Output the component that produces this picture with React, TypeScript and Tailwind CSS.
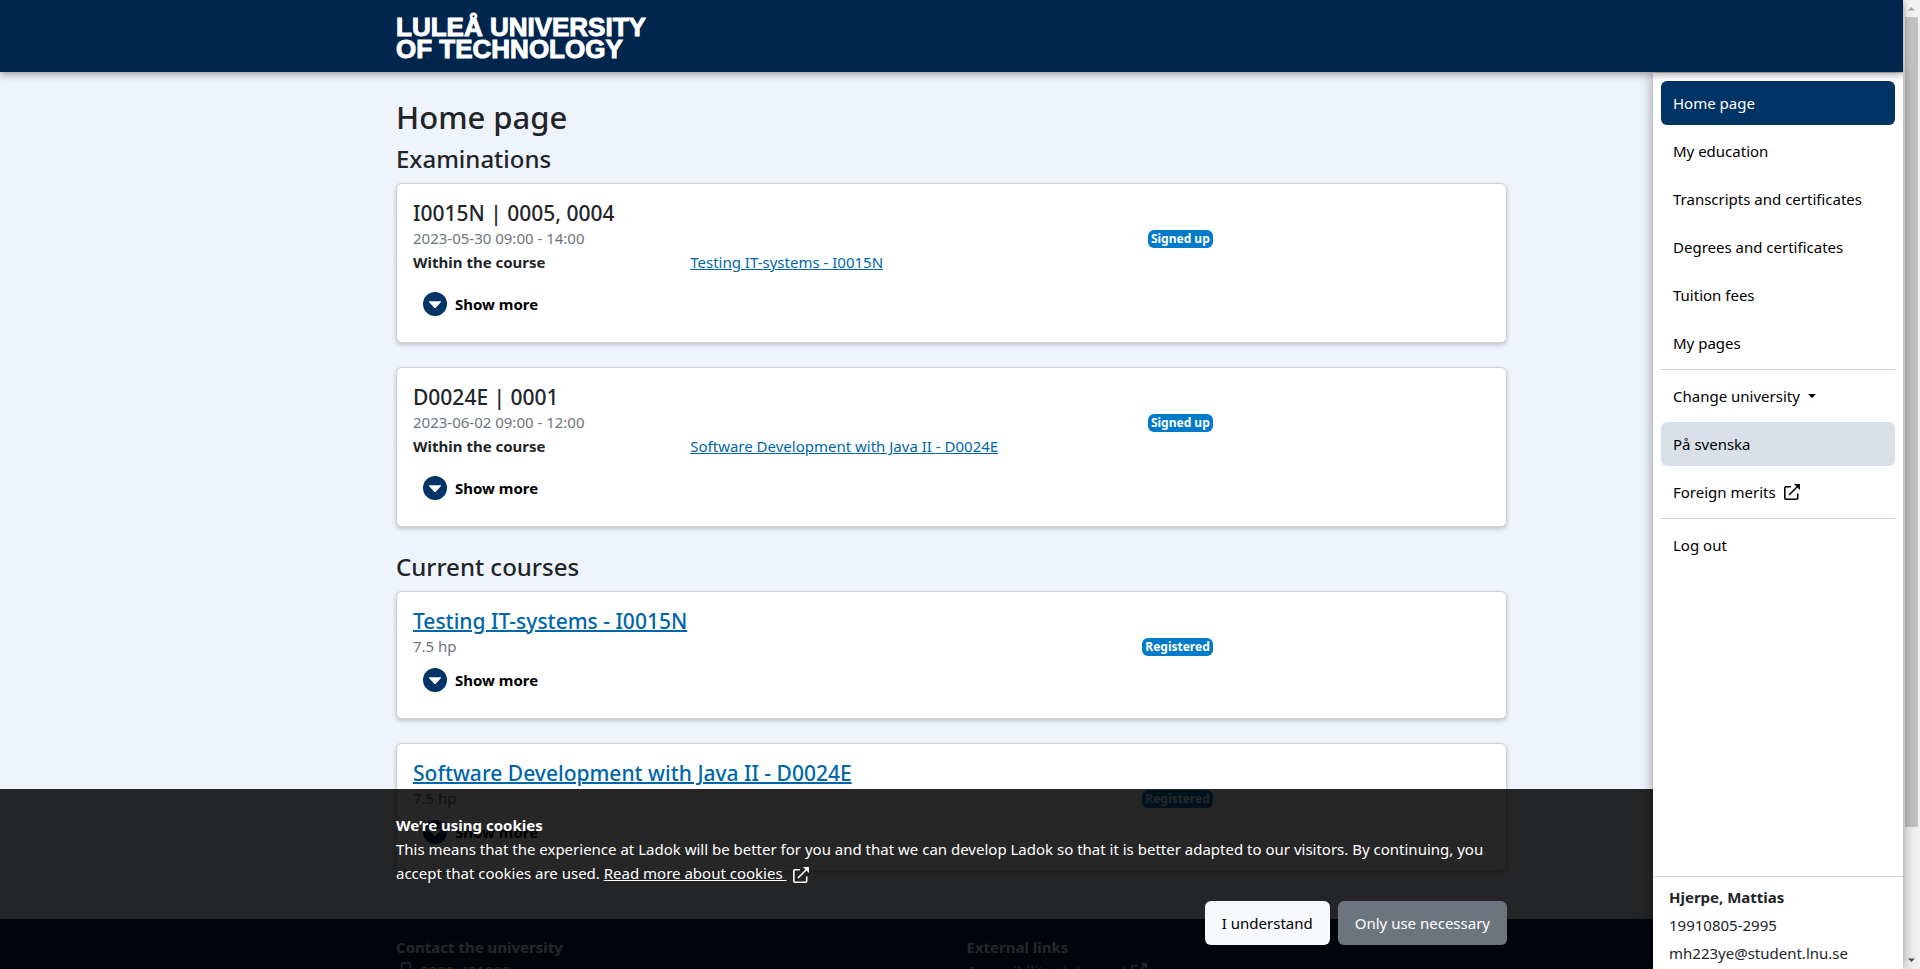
import React from "react";

type Exam = { code: string; time: string; course: string };
type Course = { name: string; credits: string };

const exams: Exam[] = [
  { code: "I0015N | 0005, 0004", time: "2023-05-30 09:00 - 14:00", course: "Testing IT-systems - I0015N" },
  { code: "D0024E | 0001", time: "2023-06-02 09:00 - 12:00", course: "Software Development with Java II - D0024E" },
];

const courses: Course[] = [
  { name: "Testing IT-systems - I0015N", credits: "7.5 hp" },
  { name: "Software Development with Java II - D0024E", credits: "7.5 hp" },
];

const pages = ["My education", "Transcripts and certificates", "Degrees and certificates", "Tuition fees", "My pages"];

function ExternalIcon() {
  return (
    <svg viewBox="0 0 16 16" className="inline-block size-4" fill="none" stroke="currentColor" strokeWidth="1.6" aria-hidden="true">
      <path d="M7 2.8H2a1.2 1.2 0 0 0-1.2 1.2v10A1.2 1.2 0 0 0 2 15.2h10.5a1.2 1.2 0 0 0 1.2-1.2V9.5" />
      <path d="M5 11 14 2" />
      <path d="M10 .1h6v6l-2-2-2-2Z" fill="currentColor" stroke="none" />
    </svg>
  );
}

function ShowMore() {
  return (
    <button type="button" className="flex h-11 items-center gap-2 self-start px-2.5 font-bold text-black">
      <svg viewBox="0 0 24 24" className="size-6" aria-hidden="true">
        <circle cx="12" cy="12" r="12" fill="#003366" />
        <path d="M6.4 9.2h11.2c.5 0 .7.5.4.9l-5.2 5.7c-.4.5-1.1.5-1.6 0L6 10.1c-.3-.4-.1-.9.4-.9Z" fill="#fff" />
      </svg>
      Show more
    </button>
  );
}

function Badge({ children }: { children: React.ReactNode }) {
  return (
    <span className="mt-0.5 flex h-[18px] items-center rounded-md bg-[#007ac9] px-[3px] text-[12px] leading-[18px] font-bold text-white">
      {children}
    </span>
  );
}

function Card({ children }: { children: React.ReactNode }) {
  return (
    <article className="mb-6 flex flex-col rounded-md border border-[#d0d0d0] bg-white py-4 shadow-[0_2px_4px_rgba(0,0,0,0.2)]">
      {children}
    </article>
  );
}

function SectionTitle({ children }: { children: React.ReactNode }) {
  return <h2 className="mb-2 text-[24px] leading-8 font-medium">{children}</h2>;
}

function NavItem({ children, tone = "" }: { children: React.ReactNode; tone?: string }) {
  return (
    <a href="#" className={`flex h-11 items-center rounded-md px-3 ${tone || "text-black"}`}>
      {children}
    </a>
  );
}

function Scrollbar() {
  return (
    <div className="flex w-[17px] shrink-0 flex-col items-center bg-[#f1f1f1]" aria-hidden="true">
      <svg viewBox="0 0 17 17" className="size-[17px]"><path d="M5 10.5 8.5 7l3.5 3.5Z" fill="#a3a3a3" /></svg>
      <div className="w-[13px] grow-[810] bg-[#c1c1c1]" />
      <div className="grow-[125]" />
      <svg viewBox="0 0 17 17" className="size-[17px]"><path d="M5 6.5 8.5 10 12 6.5Z" fill="#505050" /></svg>
    </div>
  );
}

export default function App() {
  return (
    <div className="flex h-screen overflow-hidden bg-[#eff3fb] font-['Noto_Sans','Open_Sans',sans-serif] text-[15px] leading-6 text-[#212529]">
      <div className="relative flex min-w-0 flex-1 flex-col">
        <header className="relative z-10 h-[72px] shrink-0 bg-[#00264d] shadow-[0_2px_8px_rgba(0,0,0,0.4)]">
          <div className="mx-auto max-w-[1111px] pt-4">
            <a
              href="#"
              className="inline-block font-['Liberation_Sans',Arial,sans-serif] text-[26px] leading-[22px] font-bold text-white [-webkit-text-stroke:1px_white]"
            >
              LULEÅ UNIVERSITY
              <br />
              OF TECHNOLOGY
            </a>
          </div>
        </header>

        <div className="grid min-h-0 flex-1 grid-cols-[minmax(0,1fr)_250px] grid-rows-[minmax(0,1fr)] pt-px">
          <div className="col-span-2 col-start-1 row-start-1 overflow-hidden">
            <main className="mx-auto max-w-[1111px] pt-6 pb-6">
              <h1 className="mb-1.5 text-[31px] leading-10 font-medium">Home page</h1>

              <SectionTitle>Examinations</SectionTitle>
              {exams.map((e) => (
                <Card key={e.code}>
                  <h3 className="px-4 text-[21px] leading-[26px] font-medium">{e.code}</h3>
                  <div className="flex w-3/4 items-center justify-between px-4">
                    <span className="text-[#6c757d]">{e.time}</span>
                    <Badge>Signed up</Badge>
                  </div>
                  <dl className="mb-2 grid grid-cols-4">
                    <dt className="px-4 font-bold">Within the course</dt>
                    <dd className="col-span-3 px-4">
                      <a href="#" className="text-[#0066aa] underline">{e.course}</a>
                    </dd>
                  </dl>
                  <div className="px-4"><ShowMore /></div>
                </Card>
              ))}

              <SectionTitle>Current courses</SectionTitle>
              {courses.map((c) => (
                <Card key={c.name}>
                  <h3 className="px-4 text-[21px] leading-[26px] font-medium">
                    <a href="#" className="text-[#0066aa] underline decoration-2">{c.name}</a>
                  </h3>
                  <div className="flex w-3/4 items-center justify-between px-4">
                    <span className="text-[#6c757d]">{c.credits}</span>
                    <Badge>Registered</Badge>
                  </div>
                  <div className="px-4"><ShowMore /></div>
                </Card>
              ))}
            </main>
            <footer className="bg-[#00264d] py-4 text-white">
              <div className="mx-auto grid max-w-[1111px] grid-cols-2 gap-x-[30px]">
                <div>
                  <h2 className="font-bold">Contact the university</h2>
                  <p className="flex items-center gap-2 pl-1">
                    <svg viewBox="0 0 12 18" className="h-[18px] w-3" fill="none" stroke="currentColor" strokeWidth="1.6" aria-hidden="true">
                      <rect x="1.5" y="1" width="9" height="16" rx="1.5" />
                    </svg>
                    0920-491000
                  </p>
                </div>
                <div>
                  <h2 className="font-bold">External links</h2>
                  <a href="#" className="flex items-center gap-1">Accessibility statement <ExternalIcon /></a>
                </div>
              </div>
            </footer>
          </div>

          <aside className="z-[5] col-start-2 row-start-1 flex flex-col bg-white shadow-[0_0_12px_rgba(0,0,0,0.4)]">
            <nav className="flex flex-1 flex-col gap-1 p-2">
              <NavItem tone="bg-[#003366] text-white">Home page</NavItem>
              {pages.map((p) => (
                <NavItem key={p}>{p}</NavItem>
              ))}
              <hr className="border-[#d0d0d0]" />
              <button type="button" className="flex h-11 items-center gap-2 rounded-md px-3 text-black">
                Change university
                <svg viewBox="0 0 8 4" className="h-1 w-2" aria-hidden="true"><path d="M0 0h8L4 4Z" fill="currentColor" /></svg>
              </button>
              <NavItem tone="bg-[#d9e0e8] text-black">På svenska</NavItem>
              <NavItem>
                <span className="mr-2">Foreign merits</span>
                <ExternalIcon />
              </NavItem>
              <hr className="border-[#d0d0d0]" />
              <NavItem>Log out</NavItem>
            </nav>
            <div className="flex flex-col border-t border-[#ced4da] px-4 pt-[6px] pb-0.5 leading-7">
              <strong>Hjerpe, Mattias</strong>
              <span>19910805-2995</span>
              <span>mh223ye@student.lnu.se</span>
            </div>
          </aside>
        </div>

        <section aria-label="Cookies" className="absolute right-[250px] bottom-0 left-0 z-[6] bg-black/85 py-6 text-white">
          <div className="mr-[-250px]">
            <div className="mx-auto max-w-[1111px]">
              <strong className="block">We’re using cookies</strong>
              <p>
                This means that the experience at Ladok will be better for you and that we can develop Ladok so that it is better
                adapted to our visitors. By continuing, you accept that cookies are used.{" "}
                <a href="#">
                  <span className="mr-1.5 whitespace-pre underline">Read more about cookies </span>
                  <ExternalIcon />
                </a>
              </p>
              <div className="mt-4 flex justify-end gap-2">
                <button type="button" className="h-11 rounded-md bg-[#f8f9fc] px-[17px] text-black">I understand</button>
                <button type="button" className="h-11 rounded-md bg-[#6c757d] px-[17px] text-white">Only use necessary</button>
              </div>
            </div>
          </div>
        </section>
      </div>
      <Scrollbar />
    </div>
  );
}
